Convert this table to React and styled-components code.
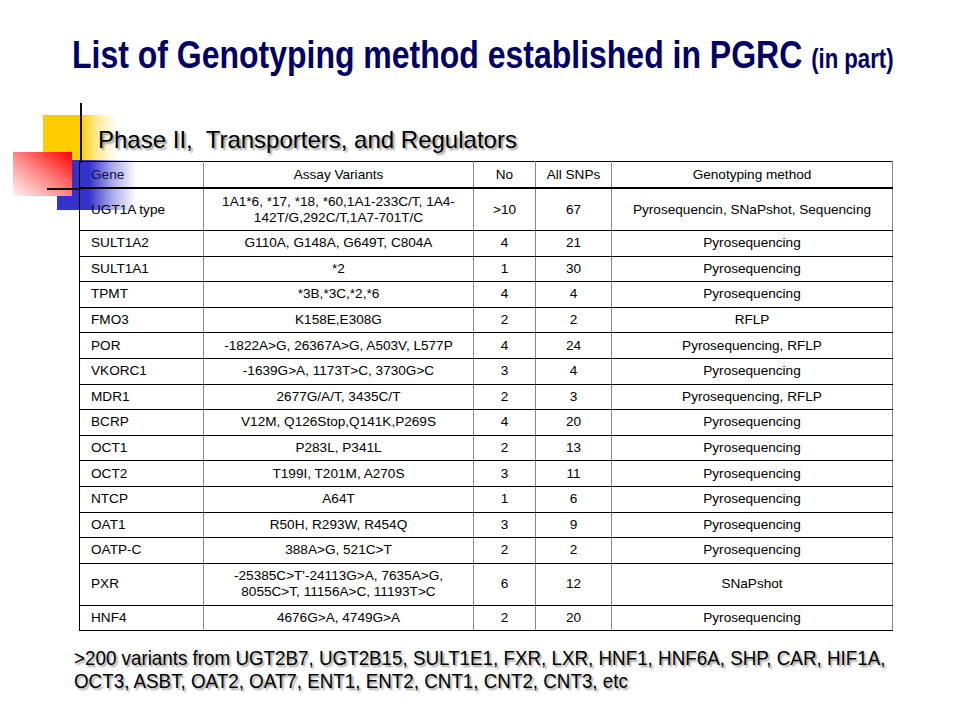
import React from 'react'
import styled, { createGlobalStyle } from 'styled-components'

const GlobalStyle = createGlobalStyle`
  body {
    margin: 0;
    background: #fff;
    font-family: "Liberation Sans", Arial, sans-serif;
  }
`

const Slide = styled.div`
  position: relative;
  width: 960px;
  height: 720px;
  background: #fff;
  overflow: hidden;
`

const Decor = styled.div`
  position: absolute;
  inset: 0;
  z-index: 0;
  pointer-events: none;
`

const Square = styled.div`
  position: absolute;
  left: ${p => p.x}px;
  top: ${p => p.y}px;
  width: ${p => p.w}px;
  height: ${p => p.h}px;
  background: ${p => p.bg};
`

const Rule = styled.div`
  position: absolute;
  left: ${p => p.x}px;
  top: ${p => p.y}px;
  width: ${p => p.w}px;
  height: ${p => p.h}px;
  background: #111;
`

const Content = styled.div`
  position: relative;
  z-index: 1;
  display: flex;
  flex-direction: column;
  align-items: flex-start;
`

/* the slide font is a condensed headline face: squeeze Arial metrics to match */
const Title = styled.h1`
  margin: 32px 0 0 72px;
  font-family: "Liberation Sans", Arial, sans-serif;
  font-weight: bold;
  font-size: 39px;
  line-height: 46px;
  color: #000066;
  white-space: nowrap;
  transform: scaleX(0.82);
  transform-origin: left center;
`

const TitleNote = styled.span`
  font-size: 27px;
`

const Subtitle = styled.h2`
  margin: 44px 0 0 98px;
  font-family: "Liberation Sans", Arial, sans-serif;
  font-weight: normal;
  font-size: 24px;
  line-height: 28px;
  color: #000;
  text-shadow: 2px 2px 2px #9a9a9a;
  white-space: nowrap;
`

const Table = styled.table`
  margin: 7px 0 0 79px;
  width: 813px;
  border-collapse: collapse;
  table-layout: fixed;
  font-family: "Liberation Sans", Arial, sans-serif;
  font-size: 13.6px;
  color: #000;
`

const HeadCell = styled.th`
  height: 25px;
  padding: ${p => (p.left ? '0 0 0 11px' : '0 4px')};
  font-weight: normal;
  text-align: ${p => (p.left ? 'left' : 'center')};
  border-top: 1px solid #000;
  border-bottom: 2px solid #000;
  border-left: 1px solid ${p => (p.first ? '#000' : '#888')};
  border-right: 1px solid #888;
  color: ${p => (p.first ? '#101040' : '#000')};
`

const Cell = styled.td`
  height: ${p => (p.tall ? 41 : 24.6)}px;
  padding: ${p => (p.left ? '0 0 0 11px' : '0 4px')};
  line-height: 16px;
  text-align: ${p => (p.left ? 'left' : 'center')};
  border-top: 1px solid #000;
  border-bottom: 1px solid #000;
  border-left: 1px solid ${p => (p.first ? '#000' : '#888')};
  border-right: 1px solid #888;
`

const Footnote = styled.p`
  margin: 15px 0 0 74px;
  font-family: "Liberation Sans", Arial, sans-serif;
  font-size: 21px;
  line-height: 23px;
  color: #000;
  text-shadow: 2px 2px 2px #a0a0a0;
  white-space: nowrap;
  transform: scaleX(0.895);
  transform-origin: left center;
`

const FootLine = styled.span`
  display: block;
`

const rows = [
  ['UGT1A type', ['1A1*6, *17, *18, *60,1A1-233C/T, 1A4-', '142T/G,292C/T,1A7-701T/C'], '>10', '67', 'Pyrosequencin, SNaPshot, Sequencing'],
  ['SULT1A2', ['G110A, G148A, G649T, C804A'], '4', '21', 'Pyrosequencing'],
  ['SULT1A1', ['*2'], '1', '30', 'Pyrosequencing'],
  ['TPMT', ['*3B,*3C,*2,*6'], '4', '4', 'Pyrosequencing'],
  ['FMO3', ['K158E,E308G'], '2', '2', 'RFLP'],
  ['POR', ['-1822A>G, 26367A>G, A503V, L577P'], '4', '24', 'Pyrosequencing, RFLP'],
  ['VKORC1', ['-1639G>A, 1173T>C, 3730G>C'], '3', '4', 'Pyrosequencing'],
  ['MDR1', ['2677G/A/T, 3435C/T'], '2', '3', 'Pyrosequencing, RFLP'],
  ['BCRP', ['V12M, Q126Stop,Q141K,P269S'], '4', '20', 'Pyrosequencing'],
  ['OCT1', ['P283L, P341L'], '2', '13', 'Pyrosequencing'],
  ['OCT2', ['T199I, T201M, A270S'], '3', '11', 'Pyrosequencing'],
  ['NTCP', ['A64T'], '1', '6', 'Pyrosequencing'],
  ['OAT1', ['R50H, R293W, R454Q'], '3', '9', 'Pyrosequencing'],
  ['OATP-C', ['388A>G, 521C>T'], '2', '2', 'Pyrosequencing'],
  ['PXR', ["-25385C>T'-24113G>A, 7635A>G,", '8055C>T, 11156A>C, 11193T>C'], '6', '12', 'SNaPshot'],
  ['HNF4', ['4676G>A, 4749G>A'], '2', '20', 'Pyrosequencing'],
]

export default function App() {
  return (
    <Slide>
      <GlobalStyle />
      <Decor>
        <Square x={43} y={115} w={75} h={46} bg="linear-gradient(to right, #ffcc00 0%, #ffcc00 48%, rgba(255,204,0,0.35) 75%, rgba(255,204,0,0) 100%)" />
        <Square x={57} y={160} w={80} h={50} bg="linear-gradient(to right, #3333cc 0%, #3333cc 40%, rgba(51,51,204,0.4) 70%, rgba(51,51,204,0) 100%)" />
        <Square x={13} y={152} w={59} h={44} bg="linear-gradient(to top right, #fff4f4 0%, #ff9090 45%, #ff0000 100%)" />
        <Rule x={80} y={103} w={2} h={60} />
        <Rule x={47} y={188} w={34} h={2} />
      </Decor>
      <Content>
        <Title>
          List of Genotyping method established in PGRC <TitleNote>(in part)</TitleNote>
        </Title>
        <Subtitle>Phase II,&nbsp; Transporters, and Regulators</Subtitle>
        <Table>
          <colgroup>
            <col style={{ width: 124 }} />
            <col style={{ width: 270 }} />
            <col style={{ width: 62 }} />
            <col style={{ width: 76 }} />
            <col style={{ width: 281 }} />
          </colgroup>
          <thead>
            <tr>
              <HeadCell first left>Gene</HeadCell>
              <HeadCell>Assay Variants</HeadCell>
              <HeadCell>No</HeadCell>
              <HeadCell>All SNPs</HeadCell>
              <HeadCell>Genotyping method</HeadCell>
            </tr>
          </thead>
          <tbody>
            {rows.map(([gene, variants, no, snps, method]) => {
              const tall = variants.length > 1
              return (
                <tr key={gene}>
                  <Cell first left tall={tall}>{gene}</Cell>
                  <Cell tall={tall}>
                    {variants.map((v, i) => (
                      <div key={i}>{v}</div>
                    ))}
                  </Cell>
                  <Cell tall={tall}>{no}</Cell>
                  <Cell tall={tall}>{snps}</Cell>
                  <Cell tall={tall}>{method}</Cell>
                </tr>
              )
            })}
          </tbody>
        </Table>
        <Footnote>
          <FootLine>&gt;200 variants from UGT2B7, UGT2B15, SULT1E1, FXR, LXR, HNF1, HNF6A, SHP, CAR, HIF1A,</FootLine>
          <FootLine>OCT3, ASBT, OAT2, OAT7, ENT1, ENT2, CNT1, CNT2, CNT3, etc</FootLine>
        </Footnote>
      </Content>
    </Slide>
  )
}
